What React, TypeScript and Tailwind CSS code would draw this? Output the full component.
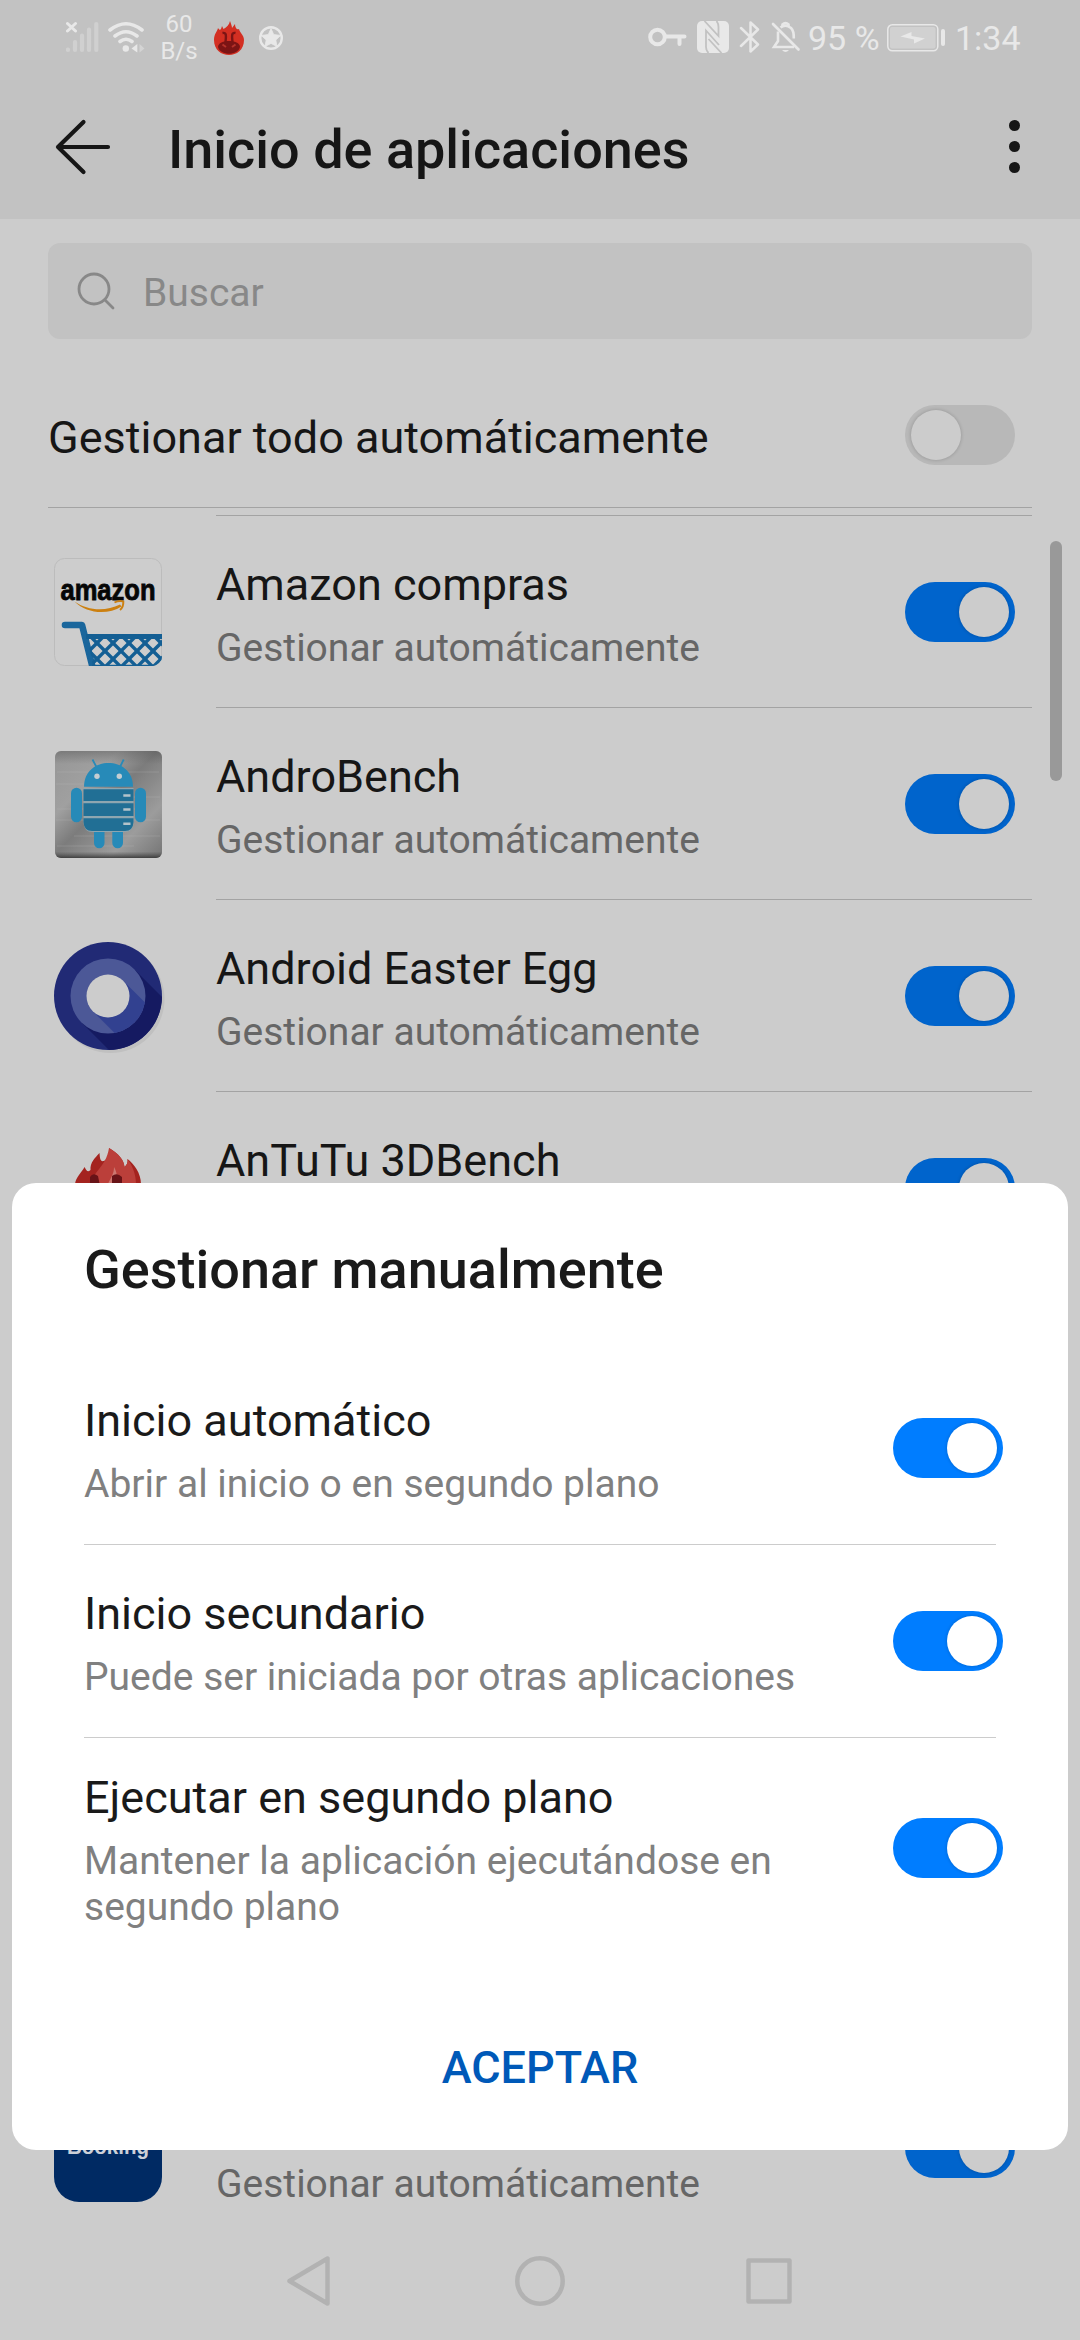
import { ReactNode } from "react"

type AppItem = {
  name: string
  status?: string
  icon: ReactNode
}

type OptionItem = {
  title: string
  description: string
}

const AmazonIcon = () => (
  <svg className="overflow-visible" width="108" height="108" viewBox="0 0 108 108">
    <defs>
      <clipPath id="amz">
        <rect width="108" height="108" rx="10" />
      </clipPath>
      <clipPath id="basket">
        <path d="M33 76H108V108H39Z" />
      </clipPath>
    </defs>
    <rect x=".5" y=".5" width="107" height="107" rx="10" fill="#cdcdcd" stroke="#bcbcbc" />
    <text x="6.500" y="42" textLength="95" lengthAdjust="spacingAndGlyphs" fontFamily="Liberation Sans, sans-serif" fontWeight="700" fontSize="29" fill="#060606" stroke="#060606" strokeWidth=".8">amazon</text>
    <path d="M20.500 43.500C34 53 52 53.500 66 46.500L67.500 48.500C54 57 33 56 20.500 43.500Z" fill="#cc8010" />
    <path d="M60.500 44.500C64 42.500 67 42.700 69.300 43.400C69.500 47 68.500 50 66 52" fill="none" stroke="#cc8010" strokeWidth="2" />
    <g clipPath="url(#amz)" stroke="#145f94" fill="none">
      <path d="M11 67H28L38.500 109" strokeWidth="6.600" strokeLinecap="round" strokeLinejoin="round" stroke="#1a669c" />
      <path d="M32 78.500H110" strokeWidth="5" />
      <g clipPath="url(#basket)" strokeWidth="3.400">
        <path d="M18 76L54 112M34 76L70 112M50 76L86 112M66 76L102 112M82 76L118 112M98 76L134 112" />
        <path d="M52 76L16 112M68 76L32 112M84 76L48 112M100 76L64 112M116 76L80 112M132 76L96 112" />
      </g>
      <path d="M38 107.500H108" strokeWidth="1.500" />
    </g>
  </svg>
)

const AndroBenchIcon = () => (
  <svg width="108" height="108" viewBox="0 0 108 108">
    <defs>
      <linearGradient id="metal" x1="0" y1="0" x2="1" y2="1">
        <stop offset="0" stopColor="#969696" />
        <stop offset=".3" stopColor="#a0a0a0" />
        <stop offset=".48" stopColor="#7c7c7c" />
        <stop offset=".75" stopColor="#9c9c9c" />
        <stop offset="1" stopColor="#747474" />
      </linearGradient>
      <linearGradient id="edge" x1="0" y1="0" x2="0" y2="1">
        <stop offset="0" stopColor="#444" stopOpacity=".35" />
        <stop offset=".12" stopColor="#444" stopOpacity="0" />
        <stop offset=".94" stopColor="#444" stopOpacity="0" />
        <stop offset="1" stopColor="#333" stopOpacity=".85" />
      </linearGradient>
    </defs>
    <rect x="1" y="1" width="107" height="107" rx="6" fill="url(#metal)" />
    <path d="M3 22H105M2 34H60M40 47H106M3 59H90M2 70H106M20 86H106M3 96H80" stroke="#c0c0c0" strokeWidth=".8" opacity=".3" />
    <rect x="1" y="1" width="107" height="107" rx="6" fill="url(#edge)" />
    <g fill="#278ab8">
      <path d="M30 36.700C30 5 79 5 79 36.700Z" />
      <path d="M38.500 9.500L43 18M69.700 9.500L65.500 18" stroke="#278ab8" strokeWidth="1.800" />
      <rect x="17" y="37.700" width="11" height="34.600" rx="5.500" />
      <rect x="81" y="37.700" width="11" height="34.600" rx="5.500" />
      <path d="M40 82H50.500V93a5.200 5.200 0 0 1-10.500 0ZM58.300 82H69V93a5.300 5.300 0 0 1-10.700 0Z" />
    </g>
    <path d="M29.500 38H79.500V72Q79.500 82 70 82H39Q29.500 82 29.500 72Z" fill="#8ea6b0" />
    <path d="M29.500 39.200H79.500V51H29.500ZM29.500 53.200H79.500V66H29.500ZM29.500 68.200H79.500V72Q79 81 71 81H38Q30 81 29.500 72Z" fill="#216f95" />
    <circle cx="43" cy="26.300" r="2.700" fill="#c3cdd2" />
    <circle cx="65.300" cy="26.300" r="2.700" fill="#c3cdd2" />
    <path d="M69.300 45.500H76.500M69.300 59.500H76.500M69.300 73.700H76.500" stroke="#b4c3ca" strokeWidth="2.600" />
  </svg>
)

const EasterEggIcon = () => (
  <svg width="112" height="112" viewBox="0 0 112 112">
    <defs>
      <clipPath id="outer">
        <circle cx="54" cy="54" r="54" />
      </clipPath>
      <clipPath id="mid">
        <circle cx="54" cy="54" r="37.500" />
      </clipPath>
    </defs>
    <circle cx="56.500" cy="57" r="54" fill="#c0c0c0" />
    <circle cx="54" cy="54" r="54" fill="#212a75" />
    <path d="M80.500 27.500L140 87L87 140L27.500 80.500Z" fill="#151a61" clipPath="url(#outer)" />
    <circle cx="54" cy="54" r="37.500" fill="#4c5897" />
    <path d="M69.200 38.800L130 99.600L99.600 130L38.800 69.200Z" fill="#324190" clipPath="url(#mid)" />
    <circle cx="54" cy="54" r="21.500" fill="#cccccc" />
  </svg>
)

const AntutuIcon = () => (
  <svg width="108" height="108" viewBox="0 0 108 108">
    <path d="M21 50C22 43 27 39 30.600 33C33 38 34 38 36.500 36C36 28 41 24 45.500 19C46 24 46 28 50 27C55 24 56 18 55 14C65 20 70 26 70.500 33C73 31 74 28 73.500 25C80 30 87 39 87 50C87 85 21 85 21 50Z" fill="#a4231f" />
    <path d="M39 50C37 38 52 34 55 14C65 20 70 26 70.500 33C73 31 74 28 73.500 25C78 31 82 40 82 50Z" fill="#bb3f3a" />
    <path d="M61 50C64 44 63 38 60 33C60 40 57 43 54 50Z" fill="#cc7770" />
    <path d="M36 50V43Q39 38 44 42L46 52ZM58 50V42Q63 38 68 43V52Z" fill="#681317" />
  </svg>
)

const BookingIcon = () => (
  <svg width="108" height="108" viewBox="0 0 108 108">
    <rect width="108" height="108" rx="25" fill="#002a63" />
    <text x="13" y="60" textLength="82" lengthAdjust="spacingAndGlyphs" fontFamily="Liberation Sans, sans-serif" fontWeight="700" fontSize="22" fill="#ccd0d8">Booking</text>
  </svg>
)

const Switch = ({ on, dim }: { on: boolean; dim?: boolean }) => {
  const track = on ? (dim ? "bg-[#0064cc] justify-end" : "bg-[#007dff] justify-end") : "bg-[#b8b8b8] justify-start"
  return (
    <div className={`flex h-[60px] w-[110px] shrink-0 items-center rounded-full px-[6px] ${track}`}>
      <div className={`size-[50px] rounded-full shadow-[0_0_3px_1px_rgba(0,0,0,0.12)] ${dim ? "bg-[#cccccc]" : "bg-white"}`} />
    </div>
  )
}

const StatusBar = () => (
  <div className="flex h-[80px] items-start text-[#e8e8e8]">
    <svg className="ml-[66px] mt-[21px]" width="34" height="32" viewBox="0 0 34 32">
      <path d="M2 28.500V29M9 21V29M16 14.500V29M23 8.500V29M30.300 3V29" stroke="#d0d0d0" strokeWidth="4.200" strokeLinecap="round" />
      <path d="M1.500 2.500L9.500 10M9.500 2.500L1.500 10" stroke="currentColor" strokeWidth="3" strokeLinecap="round" />
    </svg>
    <svg className="ml-[7px] mt-[21px]" width="38" height="32" viewBox="0 0 38 32" fill="none" stroke="currentColor" strokeWidth="3.600" strokeLinecap="round">
      <path d="M3 9Q19 -3.500 35 9M8 15Q19 6.500 30 15M13 20.500Q19 16 25 20.500" />
      <circle cx="18.800" cy="27.500" r="3.200" fill="currentColor" stroke="none" />
      <path d="M30.300 23V31.500L24.500 27.500Z" fill="currentColor" stroke="none" />
      <path d="M32.500 23V31.500L37.500 27.500Z" fill="#d4d4d4" stroke="none" />
    </svg>
    <div className="ml-[9px] mt-[11px] w-[50px] text-center text-[24px] leading-[27px]">
      <p>60</p>
      <p>B/s</p>
    </div>
    <svg className="ml-[10px] mt-[21px]" width="30" height="34" viewBox="0 0 30 34">
      <path d="M0 19C0 13 3 11 4 7C6 10 7 9 8 5L9.500 8C13 6 15 4 16 0C17 3 18 5 18 7L21 3C21 7 23 9 25 8C26 12 30 14 30 19C30 39 0 39 0 19Z" fill="#d32f22" />
      <path d="M4 26C4 18 26 18 26 26C24 35 6 35 4 26Z" fill="#7c1414" />
      <path d="M8.500 12C13 11 12 16 11.500 21M21.500 12C17 11 18 16 18.500 21" stroke="#7c1414" strokeWidth="2.400" fill="none" />
      <path d="M8.500 23.500L12 26M21.500 23.500L18 26" stroke="#b5322b" strokeWidth="2" />
    </svg>
    <svg className="ml-[15px] mt-[26px]" width="24" height="24" viewBox="0 0 24 24">
      <circle cx="12" cy="12" r="10.800" fill="none" stroke="currentColor" strokeWidth="2.400" />
      <path d="M12 2.500L14.700 8.600L21.700 9.400L16.800 14L18 20.500L12 17.400L6 20.500L7.200 14L2.300 9.400L9.300 8.600Z" fill="currentColor" stroke="currentColor" strokeWidth=".8" />
    </svg>
    <svg className="ml-auto mt-[27px]" width="39" height="20" viewBox="0 0 39 20" fill="none" stroke="currentColor" strokeWidth="4">
      <circle cx="9.500" cy="10" r="7.300" />
      <path d="M17 9.500H36.500M31.500 9.500V17" strokeLinecap="round" />
    </svg>
    <svg className="ml-[10px] mt-[21px]" width="32" height="32" viewBox="0 0 32 32">
      <rect width="32" height="32" rx="5" fill="currentColor" />
      <path d="M7.500 0L21.500 15V6Q21.500 2.500 19.500 0" stroke="#c2c2c2" strokeWidth="1.800" fill="none" />
      <path d="M11.500 32Q9 29.500 9 26V9.500L22 24M24.500 32L11.500 18" stroke="#c2c2c2" strokeWidth="1.800" fill="none" />
    </svg>
    <svg className="ml-[10px] mt-[21px]" width="22" height="32" viewBox="0 0 22 32" fill="none" stroke="currentColor" strokeWidth="2.500" strokeLinejoin="round" strokeLinecap="round">
      <path d="M2 7L19 23.500L11.500 30.500V1.500L19 8.500L2 25" />
    </svg>
    <svg className="ml-[10px] mt-[21px]" width="30" height="32" viewBox="0 0 30 32" fill="none" stroke="currentColor" strokeWidth="2.600">
      <path d="M7 10.500V20L3 26H23M9.500 6.500Q14.500 2.500 20 7Q23 10 22.800 17.500" />
      <path d="M11.500 5V3.500Q14.500 .5 17.500 3.500V5" />
      <path d="M2 3L27.500 28.500" strokeLinecap="round" />
      <path d="M11 29H18Q14.500 33 11 29Z" fill="currentColor" stroke="none" />
    </svg>
    <p className="ml-[7px] mt-[18px] w-[70px] whitespace-nowrap text-[34px] leading-[40px]">95 %</p>
    <svg className="ml-[9px] mt-[24px]" width="59" height="28" viewBox="0 0 59 28">
      <rect x=".8" y=".8" width="50" height="26" rx="4.500" fill="none" stroke="currentColor" strokeWidth="1.500" />
      <rect x="3" y="3" width="45.500" height="21.500" rx="2" fill="#d1d1d1" />
      <path d="M13.500 12.500L24.500 8V12L38 14.500L27 19.500V15.500Z" fill="currentColor" />
      <path d="M56 7V20" stroke="currentColor" strokeWidth="4" strokeLinecap="round" />
    </svg>
    <p className="ml-[9px] mr-[58px] mt-[18px] w-[67px] whitespace-nowrap text-[34px] leading-[40px]">1:34</p>
  </div>
)

const Header = () => (
  <div className="flex h-[139px] items-start text-[#161616]">
    <svg className="ml-[54px] mt-[39px]" width="58" height="56" viewBox="0 0 58 56" fill="none" stroke="currentColor" strokeWidth="4.200" strokeLinecap="round" strokeLinejoin="round">
      <path d="M54 28H4M29.500 3L4 28L29.500 53" />
    </svg>
    <h1 className="ml-[56px] mt-[38px] text-[54px] font-medium leading-[64px]">Inicio de aplicaciones</h1>
    <div className="ml-auto mr-[60px] mt-[40px] flex flex-col gap-[10px]">
      <span className="size-[11px] rounded-full bg-[#161616]" />
      <span className="size-[11px] rounded-full bg-[#161616]" />
      <span className="size-[11px] rounded-full bg-[#161616]" />
    </div>
  </div>
)

const AppRow = ({ name, status, icon }: AppItem) => (
  <div className="flex h-[192px] pl-[54px]">
    <div className="mt-[42px] w-[162px] shrink-0">{icon}</div>
    <div className="mr-[48px] flex flex-1 items-center justify-between border-b border-[#a3a3a3] pr-[17px]">
      <div className="mt-[39px] self-start">
        <p className="text-[45px] leading-[60px] text-[#161616]">{name}</p>
        {status && <p className="mt-[10px] text-[39px] leading-[46px] text-[#666666]">{status}</p>}
      </div>
      <Switch on dim />
    </div>
  </div>
)

const AUTO = "Gestionar automáticamente"

const apps: AppItem[] = [
  { name: "Amazon compras", status: AUTO, icon: <AmazonIcon /> },
  { name: "AndroBench", status: AUTO, icon: <AndroBenchIcon /> },
  { name: "Android Easter Egg", status: AUTO, icon: <EasterEggIcon /> },
  { name: "AnTuTu 3DBench", icon: <AntutuIcon /> },
]

const options: OptionItem[] = [
  { title: "Inicio automático", description: "Abrir al inicio o en segundo plano" },
  { title: "Inicio secundario", description: "Puede ser iniciada por otras aplicaciones" },
  { title: "Ejecutar en segundo plano", description: "Mantener la aplicación ejecutándose en segundo plano" },
]

const ManualDialog = () => (
  <div className="absolute left-[12px] top-[1183px] flex h-[967px] w-[1056px] flex-col rounded-[24px] bg-white pl-[72px]">
    <h2 className="mb-[50px] mt-[55px] text-[54px] font-medium leading-[64px] text-[#1a1a1a]">Gestionar manualmente</h2>
    {options.map((option, i) => {
      const last = i === options.length - 1
      return (
        <div key={option.title}>
          <div className={`flex items-center justify-between pr-[65px] ${last ? "h-[220px]" : "h-[192px]"}`}>
            <div className={`w-[730px] self-start ${last ? "mt-[30px]" : "mt-[39px]"}`}>
              <p className="text-[45px] leading-[60px] text-[#1a1a1a]">{option.title}</p>
              <p className="mt-[10px] text-[39px] leading-[46px] text-[#808080]">{option.description}</p>
            </div>
            <Switch on />
          </div>
          {!last && <div className="mr-[72px] h-px bg-[#cccccc]" />}
        </div>
      )
    })}
    <button className="mr-[72px] mt-[80px] text-[45px] font-medium leading-[60px] text-[#0059b8]">ACEPTAR</button>
  </div>
)

const NavBar = () => (
  <div className="flex h-[96px] items-start pl-[286px] pt-[12px]">
    <svg width="506" height="50" viewBox="0 0 506 50" fill="none" stroke="#b2b2b2" strokeWidth="4.500" strokeLinejoin="round">
      <path d="M41.500 2.500V47.500L3.500 25Z" />
      <circle cx="254" cy="25" r="22.700" />
      <rect x="462.500" y="4.500" width="41" height="41" />
    </svg>
  </div>
)

const App = () => {
  return (
    <div className="relative flex h-[2340px] w-[1080px] flex-col overflow-hidden bg-[#cccccc] font-['Roboto',sans-serif]">
      <div className="bg-[#c2c2c2]">
        <StatusBar />
        <Header />
      </div>

      <div className="mx-[48px] mt-[24px] flex h-[96px] shrink-0 items-center rounded-[12px] bg-[#c2c2c2] pl-[29px] text-[#888888]">
        <svg width="39" height="39" viewBox="0 0 39 39" fill="none" stroke="currentColor" strokeWidth="2.800" strokeLinecap="round">
          <circle cx="17" cy="17" r="15" />
          <path d="M28 28L36 36" />
        </svg>
        <span className="ml-[27px] pt-[4px] text-[39px] leading-[46px]">Buscar</span>
      </div>

      <div className="mx-[48px] mt-[24px] flex h-[145px] shrink-0 items-center justify-between border-b border-[#a3a3a3] pr-[17px]">
        <p className="pt-[5px] text-[45px] leading-[60px] text-[#161616]">Gestionar todo automáticamente</p>
        <Switch on={false} dim />
      </div>
      <div className="ml-[216px] mr-[48px] mt-[7px] h-px shrink-0 bg-[#a3a3a3]" />

      <div className="h-[1728px] shrink-0 overflow-hidden">
        {apps.map((app) => (
          <AppRow key={app.name} name={app.name} status={app.status} icon={app.icon} />
        ))}
        {/* rows covered by the dialog */}
        <div className="h-[768px]" />
        <div className="-mb-px h-[191px] overflow-hidden">
          <AppRow name="Booking" status={AUTO} icon={<BookingIcon />} />
        </div>
      </div>
      <NavBar />

      <div className="absolute right-[18px] top-[541px] h-[240px] w-[12px] rounded-full bg-[#999999]" />
      <ManualDialog />
    </div>
  )
}

export default App
